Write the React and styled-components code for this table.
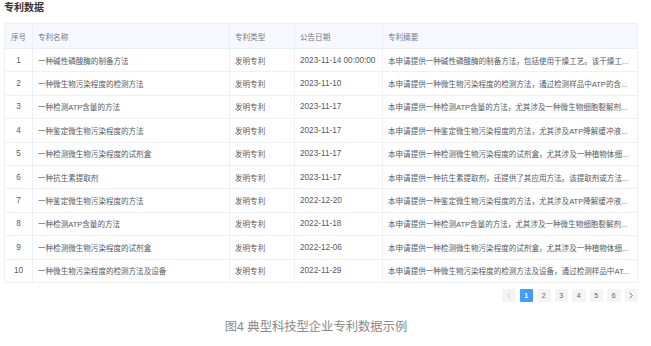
import React from "react";
import styled, { createGlobalStyle } from "styled-components";

const Global = createGlobalStyle`
  html, body { margin: 0; padding: 0; background: #fff; }
  body { font-family: "Liberation Sans", "Noto Sans CJK SC", sans-serif; }
`;

const Page = styled.div`
  width: 651px;
  height: 346px;
  box-sizing: border-box;
  padding: 0 13px 0 4px;
  display: flex;
  flex-direction: column;
`;

const Title = styled.div`
  font-size: 10px;
  font-weight: bold;
  color: #333;
  line-height: 15px;
  height: 23px;
`;

const Table = styled.table`
  width: 634px;
  border-collapse: collapse;
  table-layout: fixed;
  border: 1px solid #eef0f4;
  font-size: 7.55px;
  color: #606266;
`;

const Th = styled.th`
  height: 24px;
  padding: 0 0 0 ${(p) => (p.$center ? 0 : 5)}px;
  text-align: ${(p) => (p.$center ? "center" : "left")};
  font-weight: normal;
  color: #777b83;
  background: #f5f8fd;
  border-right: 1px solid #eceff4;
  border-bottom: 1px solid #eceff4;
  white-space: nowrap;
  overflow: hidden;
`;

const Td = styled.td`
  height: 22.4px;
  padding: 0 ${(p) => (p.$center ? 0 : 3)}px 0 ${(p) => (p.$center ? 0 : 5)}px;
  text-align: ${(p) => (p.$center ? "center" : "left")};
  font-size: ${(p) => (p.$latin ? "8.2px" : "inherit")};
  border-right: 1px solid #eef0f4;
  border-bottom: 1px solid #eef0f4;
  white-space: nowrap;
  overflow: hidden;
  text-overflow: ellipsis;
  color: #555a62;
`;

const Pager = styled.div`
  display: flex;
  justify-content: flex-end;
  gap: 4px;
  margin-top: 6px;
  width: 634px;
`;

const PageBtn = styled.div`
  width: 13.5px;
  height: 13px;
  border-radius: 1px;
  background: ${(p) => (p.$active ? "#409eff" : "#f4f4f5")};
  color: ${(p) => (p.$active ? "#fff" : p.$disabled ? "#c0c4cc" : "#606266")};
  font-size: 7px;
  font-weight: ${(p) => (p.$active ? "bold" : "normal")};
  display: flex;
  align-items: center;
  justify-content: center;
`;

const Caption = styled.div`
  margin-top: 17px;
  text-align: center;
  font-size: 12.3px;
  color: #8a8a8a;
  padding-right: 10px;
  line-height: 17px;
`;

const Chevron = ({ dir }) => (
  <svg width="6" height="7" viewBox="0 0 6 8" fill="none" stroke="currentColor" strokeWidth="1">
    {dir === "left" ? <path d="M4.5 1 L1.5 4 L4.5 7" /> : <path d="M1.5 1 L4.5 4 L1.5 7" />}
  </svg>
);

const rows = [
  ["一种碱性磷酸酶的制备方法", "2023-11-14 00:00:00", "本申请提供一种碱性磷酸酶的制备方法，包括使用干燥工艺。该干燥工..."],
  ["一种微生物污染程度的检测方法", "2023-11-10", "本申请提供一种微生物污染程度的检测方法，通过检测样品中ATP的含..."],
  ["一种检测ATP含量的方法", "2023-11-17", "本申请提供一种检测ATP含量的方法，尤其涉及一种微生物细胞裂解剂..."],
  ["一种鉴定微生物污染程度的方法", "2023-11-17", "本申请提供一种鉴定微生物污染程度的方法，尤其涉及ATP降解缓冲液..."],
  ["一种检测微生物污染程度的试剂盒", "2023-11-17", "本申请提供一种检测微生物污染程度的试剂盒，尤其涉及一种植物体细..."],
  ["一种抗生素提取剂", "2023-11-17", "本申请提供一种抗生素提取剂，还提供了其应用方法。该提取剂或方法..."],
  ["一种鉴定微生物污染程度的方法", "2022-12-20", "本申请提供一种鉴定微生物污染程度的方法，尤其涉及ATP降解缓冲液..."],
  ["一种检测ATP含量的方法", "2022-11-18", "本申请提供一种检测ATP含量的方法，尤其涉及一种微生物细胞裂解剂..."],
  ["一种检测微生物污染程度的试剂盒", "2022-12-06", "本申请提供一种检测微生物污染程度的试剂盒，尤其涉及一种植物体细..."],
  ["一种微生物污染程度的检测方法及设备", "2022-11-29", "本申请提供一种微生物污染程度的检测方法及设备，通过检测样品中AT..."],
];

export default function App() {
  return (
    <>
      <Global />
      <Page>
        <Title>专利数据</Title>
        <Table>
          <colgroup>
            <col style={{ width: 28 }} />
            <col style={{ width: 197 }} />
            <col style={{ width: 65 }} />
            <col style={{ width: 88 }} />
            <col />
          </colgroup>
          <thead>
            <tr>
              <Th $center>序号</Th>
              <Th>专利名称</Th>
              <Th>专利类型</Th>
              <Th>公告日期</Th>
              <Th>专利摘要</Th>
            </tr>
          </thead>
          <tbody>
            {rows.map((r, i) => (
              <tr key={i}>
                <Td $center $latin>{i + 1}</Td>
                <Td>{r[0]}</Td>
                <Td>发明专利</Td>
                <Td $latin>{r[1]}</Td>
                <Td>{r[2]}</Td>
              </tr>
            ))}
          </tbody>
        </Table>
        <Pager>
          <PageBtn $disabled><Chevron dir="left" /></PageBtn>
          {[1, 2, 3, 4, 5, 6].map((n) => (
            <PageBtn key={n} $active={n === 1}>{n}</PageBtn>
          ))}
          <PageBtn><Chevron dir="right" /></PageBtn>
        </Pager>
        <Caption>图4 典型科技型企业专利数据示例</Caption>
      </Page>
    </>
  );
}
